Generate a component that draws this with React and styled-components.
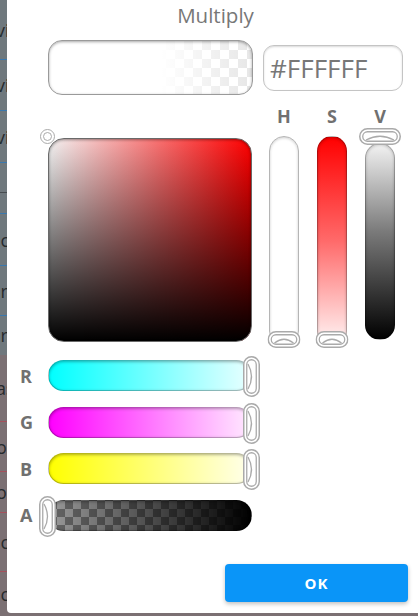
import styled, { createGlobalStyle } from "styled-components";

const GlobalStyle = createGlobalStyle`
  html, body {
    margin: 0;
    padding: 0;
    background: #5f5a5c;
  }
  body {
    font-family: "Open Sans", "Noto Sans", sans-serif;
  }
`;

const checker = (a, b, size) =>
  `conic-gradient(${a} 25%, ${b} 0 50%, ${a} 0 75%, ${b} 0) 0 0 / ${size}px ${size}px`;

const Screen = styled.div`
  position: relative;
  width: 418px;
  height: 616px;
  overflow: hidden;
  background: #5f5a5c;
`;

// list that sits behind the dimmed modal
const BehindList = styled.div`
  display: flex;
  flex-direction: column;
  width: 100%;
`;

const BehindRow = styled.div`
  height: ${(p) => p.$h}px;
  box-sizing: border-box;
  display: flex;
  align-items: center;
  background: ${(p) => (p.$warm ? "#7b7073" : "#6f787d")};
  border-bottom: 1px solid ${(p) => p.$line};
  font-size: 18px;
  color: #262a2d;
  overflow: hidden;
  white-space: nowrap;
`;

const BehindText = styled.span`
  margin-left: -4px;
`;

const Dialog = styled.div`
  position: absolute;
  left: 7px;
  top: 0;
  right: 0;
  height: 613px;
  background: #fff;
  border-bottom-left-radius: 4px;
  display: flex;
  flex-direction: column;
`;

const Title = styled.div`
  height: 30px;
  line-height: 30px;
  text-align: center;
  font-size: 20.5px;
  color: #777;
  padding-left: 6px;
`;

const TopRow = styled.div`
  display: flex;
  align-items: center;
  gap: 10px;
  margin-top: 10px;
  padding-left: 41px;
`;

const Preview = styled.div`
  width: 205px;
  height: 55px;
  box-sizing: border-box;
  border-radius: 14px;
  border: 1px solid #9a9a9a;
  box-shadow: inset 0 1px 3px rgba(0, 0, 0, 0.35);
  background: linear-gradient(to right, #fff 55%, rgba(255, 255, 255, 0.1) 100%),
    ${checker("#e4e4e4", "#fff", 18)};
`;

const HexField = styled.div`
  width: 140px;
  height: 46px;
  box-sizing: border-box;
  border-radius: 11px;
  border: 1px solid #c4c4c4;
  box-shadow: inset 0 1px 2px rgba(0, 0, 0, 0.15);
  display: flex;
  align-items: center;
  padding-left: 6px;
  font-size: 26px;
  color: #777;
`;

const PickerRow = styled.div`
  display: flex;
  align-items: flex-start;
  margin-top: 11px;
  padding-left: 41px;
`;

const SVBox = styled.div`
  position: relative;
  width: 204px;
  height: 204px;
  margin-top: 32px;
  box-sizing: border-box;
  border-radius: 16px;
  border: 1px solid #6a6a6a;
  box-shadow: inset 0 1px 3px rgba(0, 0, 0, 0.4);
  background: linear-gradient(to top, #000, rgba(0, 0, 0, 0)),
    linear-gradient(to right, #f4f4f4, #f00);
`;

const SVKnob = styled.div`
  position: absolute;
  left: -9px;
  top: -10px;
  width: 15px;
  height: 15px;
  box-sizing: border-box;
  border-radius: 50%;
  border: 1.5px solid #aaa;
  background: #fff;
  &::after {
    content: "";
    position: absolute;
    inset: 2px;
    border-radius: 50%;
    border: 1.5px solid #aaa;
  }
`;

const Channels = styled.div`
  display: flex;
  gap: 18px;
  margin-left: 17px;
`;

const Channel = styled.div`
  display: flex;
  flex-direction: column;
  align-items: center;
  width: 30px;
`;

const ChannelLabel = styled.div`
  height: 20px;
  line-height: 20px;
  font-size: 18px;
  font-weight: 700;
  color: #707070;
`;

const VTrack = styled.div`
  position: relative;
  width: 30px;
  height: ${(p) => p.$h}px;
  margin-top: ${(p) => p.$top}px;
  box-sizing: border-box;
  border-radius: 15px;
  border: 1px solid ${(p) => p.$edge || "rgba(0, 0, 0, 0.3)"};
  box-shadow: inset 0 1px 3px rgba(0, 0, 0, 0.2);
  background: ${(p) => p.$fill};
`;

const VKnobWrap = styled.div`
  position: absolute;
  left: 50%;
  transform: translateX(-50%);
  ${(p) => (p.$at === "top" ? "top: -16px;" : "bottom: -3px;")}
  display: flex;
`;

const RgbaList = styled.div`
  display: flex;
  flex-direction: column;
  gap: 15.5px;
  margin-top: 14px;
`;

const RgbaRow = styled.div`
  display: flex;
  align-items: center;
`;

const RgbaLabel = styled.div`
  width: 41px;
  box-sizing: border-box;
  padding-left: 13px;
  font-size: 18px;
  font-weight: 700;
  color: #707070;
`;

const HTrack = styled.div`
  position: relative;
  width: 204px;
  height: 31px;
  box-sizing: border-box;
  border-radius: 15.5px;
  border: 1px solid rgba(0, 0, 0, 0.28);
  box-shadow: inset 0 1px 3px rgba(0, 0, 0, 0.3);
  background: ${(p) => p.$fill};
`;

const HKnobWrap = styled.div`
  position: absolute;
  top: -5px;
  ${(p) => (p.$at === "start" ? "left: -10px;" : "right: -9px;")}
  display: flex;
`;

const Footer = styled.div`
  display: flex;
  justify-content: flex-end;
  margin-top: 33px;
  padding-right: 10px;
`;

const OkButton = styled.button`
  width: 183px;
  height: 38px;
  border: none;
  border-radius: 4px;
  background: #0a95f8;
  color: #fff;
  font-family: "Open Sans", sans-serif;
  font-size: 15px;
  font-weight: 700;
  letter-spacing: 1px;
  box-shadow: 0 2px 4px rgba(0, 0, 0, 0.25);
`;

// horizontal stadium grip used on the vertical tracks
const VGrip = ({ width }) => (
  <svg width={width} height="17" viewBox={`0 0 ${width} 17`}>
    <rect x="0.75" y="0.75" width={width - 1.5} height="15.5" rx="7.75" fill="#fff" stroke="#aaa" strokeWidth="1.5" />
    <rect x="3.75" y="3.75" width={width - 7.5} height="9.5" rx="4.75" fill="none" stroke="#aaa" strokeWidth="1.3" />
    <path d={`M7 12 Q ${width / 2} 4.5 ${width - 7} 12`} fill="none" stroke="#aaa" strokeWidth="1.3" />
  </svg>
);

// vertical stadium grip used on the horizontal tracks
const HGrip = () => (
  <svg width="17" height="41" viewBox="0 0 17 41">
    <rect x="0.75" y="0.75" width="15.5" height="39.5" rx="7.75" fill="#fff" stroke="#aaa" strokeWidth="1.5" />
    <rect x="3.75" y="3.75" width="9.5" height="33.5" rx="4.75" fill="none" stroke="#aaa" strokeWidth="1.3" />
    <path d="M5 8 Q 12 20.5 5 33" fill="none" stroke="#aaa" strokeWidth="1.3" />
  </svg>
);

const behindRows = [
  { h: 60, t: "vi", line: "#3b78ad" },
  { h: 51, t: "vi", line: "#3b78ad" },
  { h: 52, t: "vi", line: "#3b78ad" },
  { h: 30, t: "", line: "#474c50" },
  { h: 21, t: "", line: "#3b78ad" },
  { h: 52, t: "ic", line: "#3b78ad" },
  { h: 50, t: "ir", line: "#3b78ad" },
  { h: 39, t: "ir", line: "#6f787d" },
  { h: 67, t: "as", line: "#a5505c", warm: true },
  { h: 50, t: "or", line: "#a5505c", warm: true },
  { h: 41, t: "or", line: "#a5505c", warm: true },
  { h: 59, t: "ic", line: "#a5505c", warm: true },
  { h: 44, t: "ic", line: "#7b7073", warm: true },
];

const rgba = [
  { label: "R", fill: "linear-gradient(to right, #00ffff, #e9ffff)", at: "end" },
  { label: "G", fill: "linear-gradient(to right, #ff00ff, #ffeaff)", at: "end" },
  { label: "B", fill: "linear-gradient(to right, #ffff00, #ffffec)", at: "end" },
  {
    label: "A",
    fill: `linear-gradient(to right, rgba(0,0,0,0), rgba(0,0,0,0.55) 55%, #000), ${checker("#9a9a9a", "#666", 16)}`,
    at: "start",
  },
];

const App = () => {
  return (
    <Screen>
      <GlobalStyle />
      <BehindList>
        {behindRows.map((r, i) => (
          <BehindRow key={i} $h={r.h} $line={r.line} $warm={r.warm}>
            <BehindText>{r.t}</BehindText>
          </BehindRow>
        ))}
      </BehindList>

      <Dialog>
        <Title>Multiply</Title>

        <TopRow>
          <Preview />
          <HexField>#FFFFFF</HexField>
        </TopRow>

        <PickerRow>
          <SVBox>
            <SVKnob />
          </SVBox>
          <Channels>
            <Channel>
              <ChannelLabel>H</ChannelLabel>
              <VTrack $top={10} $h={210} $fill="#fff" $edge="#b5b5b5">
                <VKnobWrap $at="bottom">
                  <VGrip width={33} />
                </VKnobWrap>
              </VTrack>
            </Channel>
            <Channel>
              <ChannelLabel>S</ChannelLabel>
              <VTrack $top={10} $h={210} $fill="linear-gradient(to bottom, #ff0000, #ff6a6a 50%, #fff6f6)">
                <VKnobWrap $at="bottom">
                  <VGrip width={33} />
                </VKnobWrap>
              </VTrack>
            </Channel>
            <Channel>
              <ChannelLabel>V</ChannelLabel>
              <VTrack $top={17} $h={197} $fill="linear-gradient(to bottom, #f2f2f2, #7a7a7a 45%, #000)">
                <VKnobWrap $at="top">
                  <VGrip width={42} />
                </VKnobWrap>
              </VTrack>
            </Channel>
          </Channels>
        </PickerRow>

        <RgbaList>
          {rgba.map((c) => (
            <RgbaRow key={c.label}>
              <RgbaLabel>{c.label}</RgbaLabel>
              <HTrack $fill={c.fill}>
                <HKnobWrap $at={c.at}>
                  <HGrip />
                </HKnobWrap>
              </HTrack>
            </RgbaRow>
          ))}
        </RgbaList>

        <Footer>
          <OkButton>OK</OkButton>
        </Footer>
      </Dialog>
    </Screen>
  );
};

export default App;
